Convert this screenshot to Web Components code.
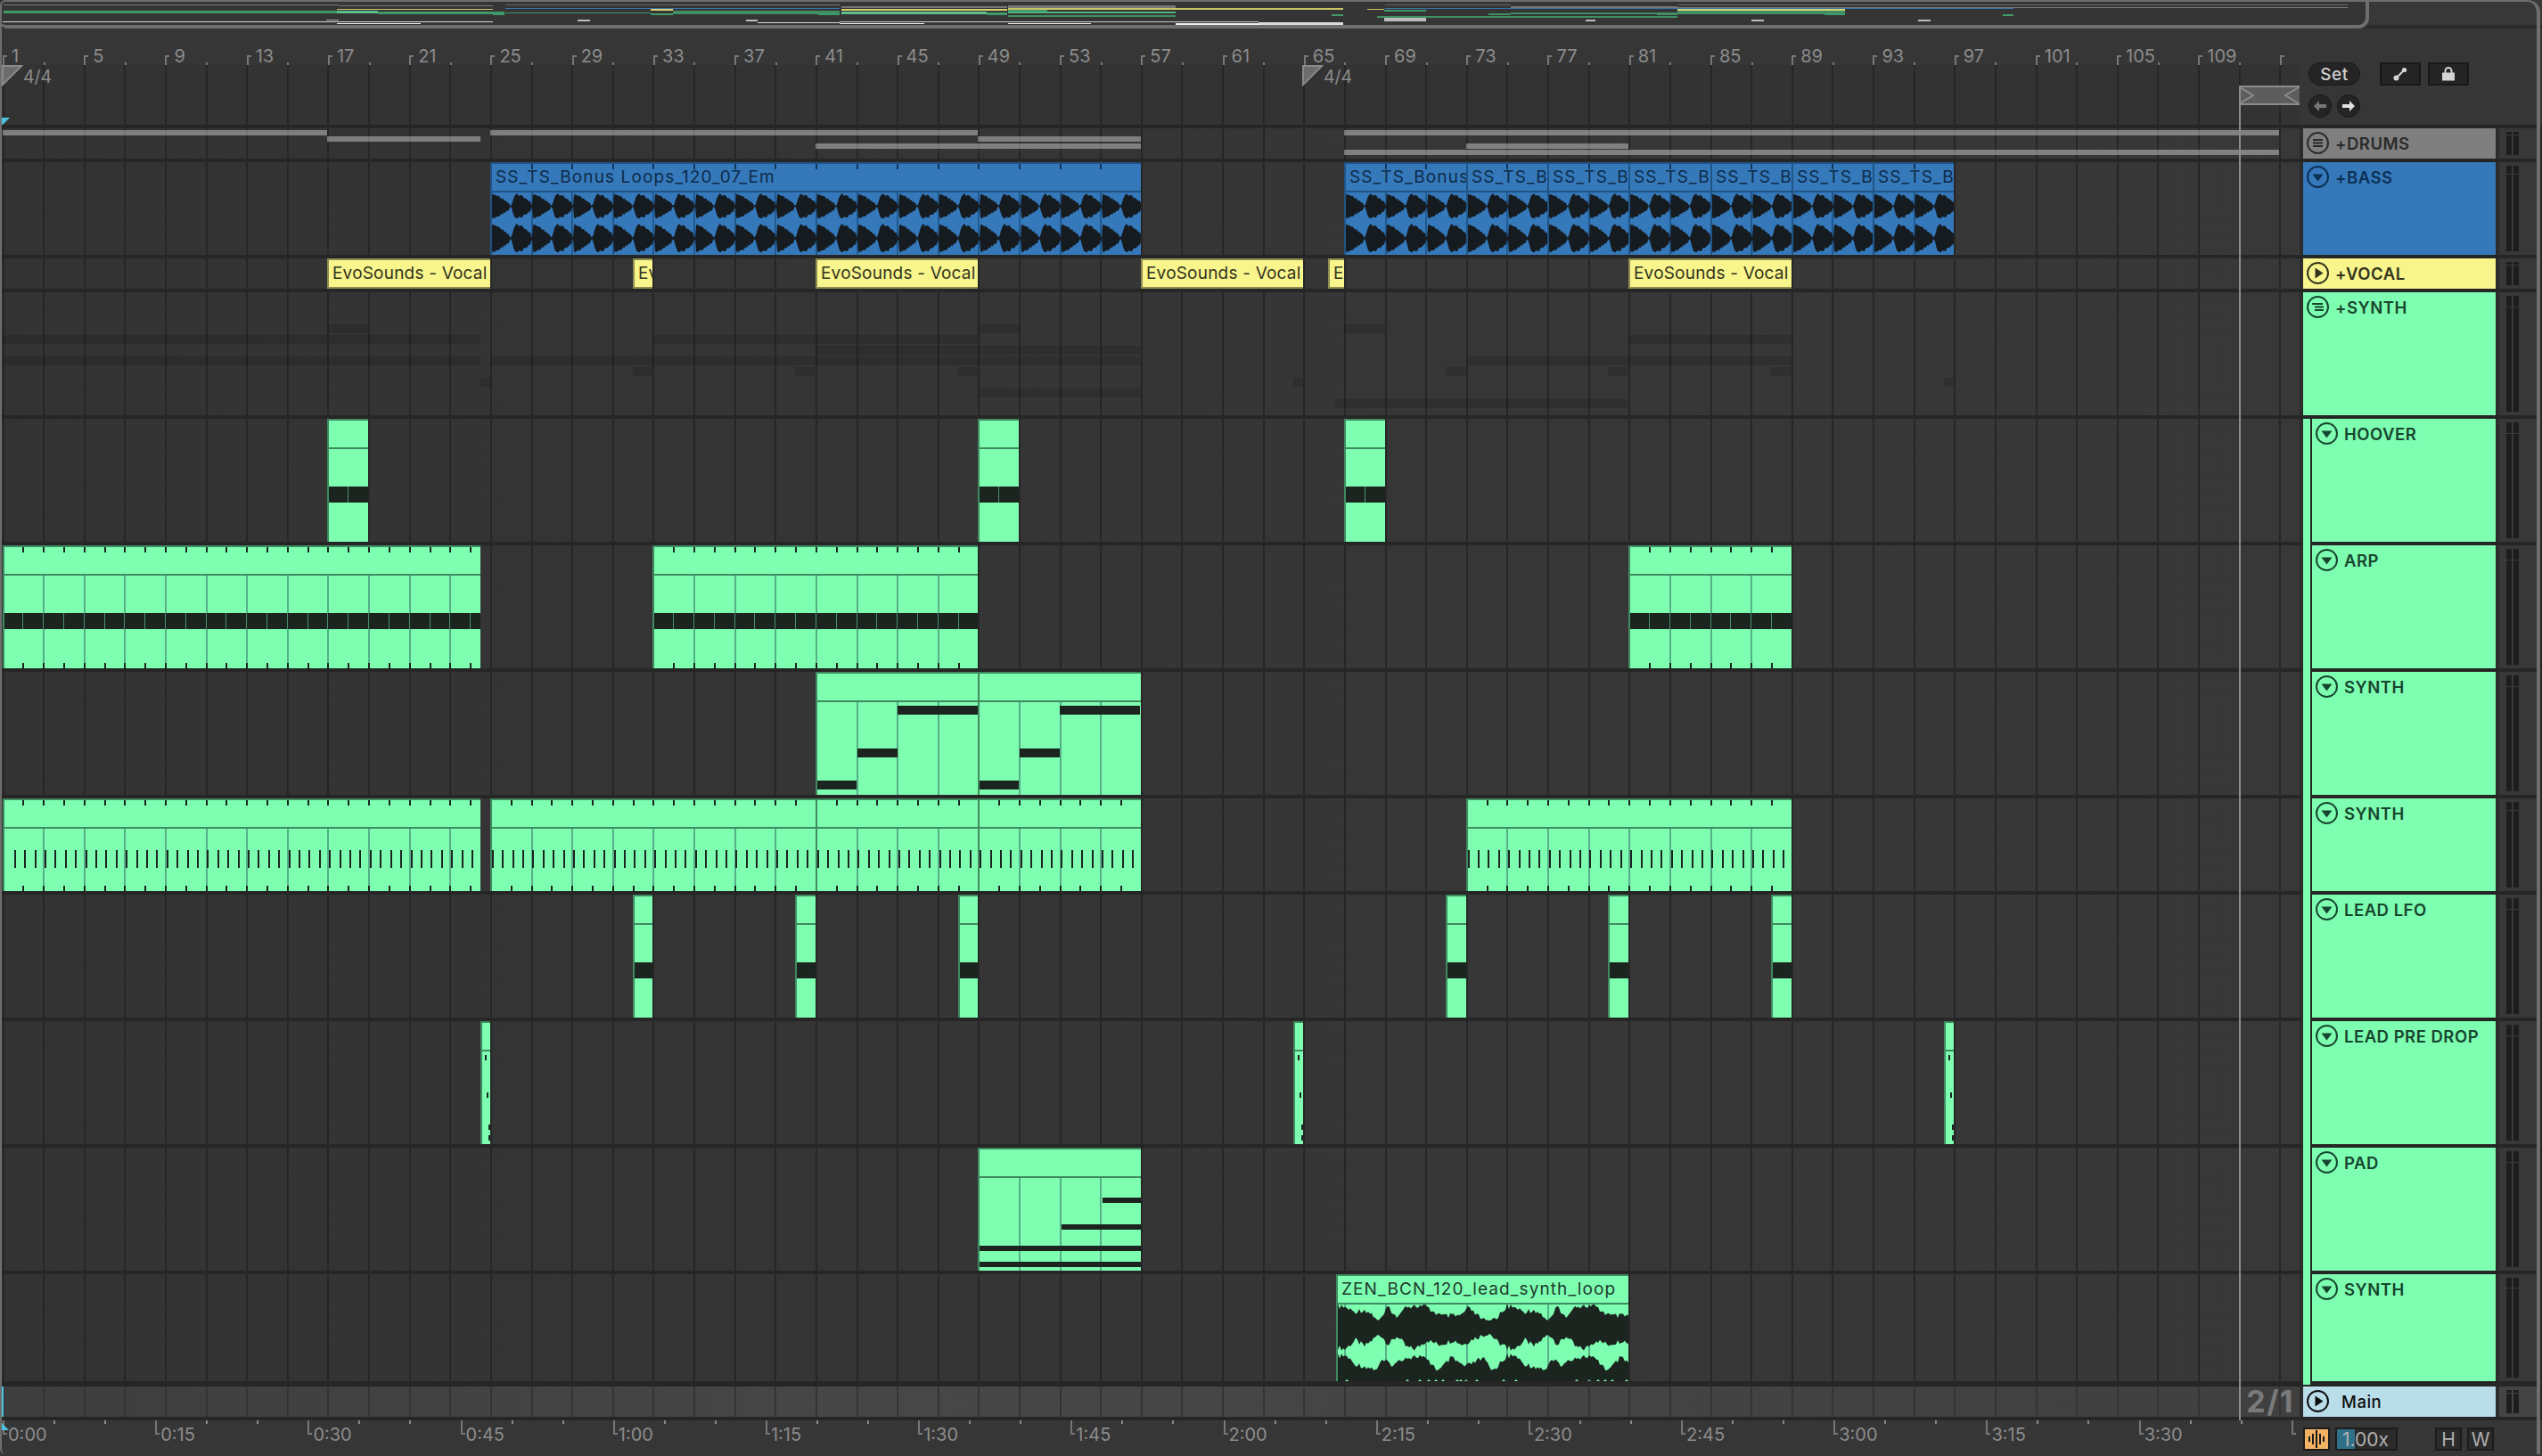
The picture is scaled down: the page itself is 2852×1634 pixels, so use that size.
<!DOCTYPE html>
<html>
<head>
<meta charset="utf-8">
<title>Arrangement</title>
<style>
html,body{margin:0;padding:0;background:#363636;overflow:hidden}
body{font-family:Inter,"Liberation Sans",sans-serif}
</style>
</head>
<body>
<daw-app>
  <daw-overview></daw-overview>
  <daw-ruler></daw-ruler>
  <daw-arrangement>
    <daw-track name="+DRUMS" tone="gray" icon="lines" h="34">
      <daw-block from="1" to="17" y="2" h="6"></daw-block>
      <daw-block from="25" to="49" y="2" h="6"></daw-block>
      <daw-block from="67" to="113" y="2" h="6"></daw-block>
      <daw-block from="17" to="24.5" y="9" h="6"></daw-block>
      <daw-block from="49" to="57" y="9" h="6"></daw-block>
      <daw-block from="41" to="57" y="17" h="6"></daw-block>
      <daw-block from="73" to="81" y="17" h="6"></daw-block>
      <daw-block from="67" to="113" y="24" h="6"></daw-block>
    </daw-track>
    <daw-track name="+BASS" tone="blue" icon="down" h="104">
      <daw-clip from="25" to="57" tone="blue" ticks="2" wave="blue" wide label="SS_TS_Bonus Loops_120_07_Em"></daw-clip>
      <daw-clip from="67" to="73" tone="blue" ticks="2" wave="blue" wide label="SS_TS_Bonus"></daw-clip>
      <daw-clip from="73" to="77" tone="blue" ticks="2" wave="blue" wide label="SS_TS_Bo"></daw-clip>
      <daw-clip from="77" to="81" tone="blue" ticks="2" wave="blue" wide label="SS_TS_B"></daw-clip>
      <daw-clip from="81" to="85" tone="blue" ticks="2" wave="blue" wide label="SS_TS_Bo"></daw-clip>
      <daw-clip from="85" to="89" tone="blue" ticks="2" wave="blue" wide label="SS_TS_Bo"></daw-clip>
      <daw-clip from="89" to="93" tone="blue" ticks="2" wave="blue" wide label="SS_TS_B"></daw-clip>
      <daw-clip from="93" to="97" tone="blue" ticks="2" wave="blue" wide label="SS_TS_Bo"></daw-clip>
    </daw-track>
    <daw-track name="+VOCAL" tone="yellow" icon="play" h="34">
      <daw-clip from="17" to="25" tone="yellow" plain label="EvoSounds - Vocal"></daw-clip>
      <daw-clip from="32" to="33" tone="yellow" plain label="Ev"></daw-clip>
      <daw-clip from="41" to="49" tone="yellow" plain label="EvoSounds - Vocal"></daw-clip>
      <daw-clip from="57" to="65" tone="yellow" plain label="EvoSounds - Vocal"></daw-clip>
      <daw-clip from="66.2" to="67" tone="yellow" plain label="E"></daw-clip>
      <daw-clip from="81" to="89" tone="yellow" plain label="EvoSounds - Vocal"></daw-clip>
    </daw-track>
    <daw-track name="+SYNTH" tone="green" icon="fold" h="138">
      <daw-block shade from="17" to="19" y="36" h="10"></daw-block>
      <daw-block shade from="49" to="51" y="36" h="10"></daw-block>
      <daw-block shade from="67" to="69" y="36" h="10"></daw-block>
      <daw-block shade from="1" to="24.5" y="48" h="10"></daw-block>
      <daw-block shade from="33" to="49" y="48" h="10"></daw-block>
      <daw-block shade from="81" to="89" y="48" h="10"></daw-block>
      <daw-block shade from="41" to="57" y="60" h="10"></daw-block>
      <daw-block shade from="1" to="24.5" y="72" h="10"></daw-block>
      <daw-block shade from="25" to="57" y="72" h="10"></daw-block>
      <daw-block shade from="73" to="89" y="72" h="10"></daw-block>
      <daw-block shade from="32" to="33" y="84" h="10"></daw-block>
      <daw-block shade from="40" to="41" y="84" h="10"></daw-block>
      <daw-block shade from="48" to="49" y="84" h="10"></daw-block>
      <daw-block shade from="72" to="73" y="84" h="10"></daw-block>
      <daw-block shade from="80" to="81" y="84" h="10"></daw-block>
      <daw-block shade from="88" to="89" y="84" h="10"></daw-block>
      <daw-block shade from="24.5" to="25" y="96" h="10"></daw-block>
      <daw-block shade from="64.5" to="65" y="96" h="10"></daw-block>
      <daw-block shade from="96.5" to="97" y="96" h="10"></daw-block>
      <daw-block shade from="49" to="57" y="108" h="10"></daw-block>
      <daw-block shade from="66.55" to="81" y="120" h="10"></daw-block>
    </daw-track>
    <daw-track name="HOOVER" tone="green" icon="down" h="138" nested>
      <daw-clip from="17" to="19" tone="green" band="76 18"></daw-clip>
      <daw-clip from="49" to="51" tone="green" band="76 18"></daw-clip>
      <daw-clip from="67" to="69" tone="green" band="76 18"></daw-clip>
    </daw-track>
    <daw-track name="ARP" tone="green" icon="down" h="138" nested>
      <daw-clip from="1" to="24.5" tone="green" ticks="1" both band="76 18"></daw-clip>
      <daw-clip from="33" to="49" tone="green" ticks="1" both band="76 18"></daw-clip>
      <daw-clip from="81" to="89" tone="green" ticks="1" both band="76 18"></daw-clip>
    </daw-track>
    <daw-track name="SYNTH" tone="green" icon="down" h="138" nested>
      <daw-clip from="41" to="49" tone="green" notes="1 122 44 10;46 86 45 10;91 38 90 10"></daw-clip>
      <daw-clip from="49" to="57" tone="green" notes="1 122 44 10;46 86 45 10;91 38 90 10"></daw-clip>
    </daw-track>
    <daw-track name="SYNTH" tone="green" icon="down" h="104" nested>
      <daw-clip from="1" to="24.5" tone="green" ticks="1" both pulse="58 20"></daw-clip>
      <daw-clip from="25" to="41" tone="green" ticks="1" both pulse="58 20"></daw-clip>
      <daw-clip from="41" to="49" tone="green" ticks="1" both pulse="58 20"></daw-clip>
      <daw-clip from="49" to="57" tone="green" ticks="1" both pulse="58 20"></daw-clip>
      <daw-clip from="73" to="89" tone="green" ticks="1" both pulse="58 20"></daw-clip>
    </daw-track>
    <daw-track name="LEAD LFO" tone="green" icon="down" h="138" nested>
      <daw-clip from="32" to="33" tone="green" band="76 18"></daw-clip>
      <daw-clip from="40" to="41" tone="green" band="76 18"></daw-clip>
      <daw-clip from="48" to="49" tone="green" band="76 18"></daw-clip>
      <daw-clip from="72" to="73" tone="green" band="76 18"></daw-clip>
      <daw-clip from="80" to="81" tone="green" band="76 18"></daw-clip>
      <daw-clip from="88" to="89" tone="green" band="76 18"></daw-clip>
    </daw-track>
    <daw-track name="LEAD PRE DROP" tone="green" icon="down" h="138" nested>
      <daw-clip from="24.5" to="25" tone="green" notes="4 38 2 6;6 80 2 6;10 110 2 6;8 116 2 6;8 128 2 6"></daw-clip>
      <daw-clip from="64.5" to="65" tone="green" notes="4 38 2 6;6 80 2 6;10 110 2 6;8 116 2 6;8 128 2 6"></daw-clip>
      <daw-clip from="96.5" to="97" tone="green" notes="4 38 2 6;6 80 2 6;10 110 2 6;8 116 2 6;8 128 2 6"></daw-clip>
    </daw-track>
    <daw-track name="PAD" tone="green" icon="down" h="138" nested>
      <daw-clip from="49" to="57" tone="green" notes="139 56 44 6;93 86 90 6;1 110 182 6;1 128 182 6"></daw-clip>
    </daw-track>
    <daw-track name="SYNTH" tone="green" icon="down" h="120" nested>
      <daw-clip from="66.6" to="81" tone="green" wave="green" wide label="ZEN_BCN_120_lead_synth_loop"></daw-clip>
    </daw-track>
    <daw-track name="Main" tone="sky" icon="play" h="34" main>
      <daw-meter-label>2/1</daw-meter-label>
    </daw-track>
  </daw-arrangement>
  <daw-timeline></daw-timeline>
</daw-app>

<script>
// timeline: one bar is 22.81px, first bar starts just right of the window edge
const BAR = 22.81, X0 = 3.5;
const barX = b => X0 + (b - 1) * BAR;
const snap = b => Math.round(barX(b) - 1);

function gridLines(color) {
  let r = '';
  for (let n = 0; n <= 56; n++) {
    r += `<rect x="${Math.round(X0 + n * BAR * 2) - 1}" y="0" width="2" height="100%"/>`;
  }
  return `<svg class="grid" width="2580" height="100%" fill="${color}" shape-rendering="crispEdges" style="position:absolute;left:0;top:0;height:100%">${r}</svg>`;
}

const ICONS = {
  lines: '<rect x="7" y="8" width="11" height="2"/><rect x="7" y="11.5" width="11" height="2"/><rect x="7" y="15" width="11" height="2"/>',
  fold: '<rect x="6" y="8" width="12" height="2"/><rect x="9" y="11.5" width="10" height="2"/><rect x="9" y="15" width="10" height="2"/>',
  down: '<polygon points="6.5,9.5 18.5,9.5 12.5,17.5"/>',
  play: '<polygon points="9.5,6.5 9.5,18.5 18.5,12.5"/>'
};

class DawApp extends HTMLElement {
  constructor() {
    super();
    this.attachShadow({mode: 'open'}).innerHTML = `
<style>
:host{display:flex;flex-direction:column;position:relative;width:2852px;height:1634px;overflow:hidden;background:#363636;font-family:Inter,"Liberation Sans",sans-serif}
.frame{position:absolute;left:0;top:0;width:2844px;height:1630px;border:solid #6e6e6e;border-width:2px 4px 0 2px;border-radius:6px 14px 0 6px;pointer-events:none;z-index:6}
.loopline{position:absolute;left:2512px;top:96px;width:2px;height:1498px;background:#8c8c8c;z-index:5}
</style>
<slot></slot><div class="loopline"></div><div class="frame"></div>`;
  }
}

class DawOverview extends HTMLElement {
  constructor() {
    super();
    const segs = [
      // grey summary lines
      [4,380,5,1,'#7a7a7a'],[380,553,6,1,'#7a7a7a'],[567,942,5,1,'#666'],[755,942,5,1,'#777'],[944,1130,7,2,'#777'],[1131,1319,6,3,'#777'],
      [1554,1695,5,1,'#666'],[1695,1882,7,2,'#777'],[1882,2634,5,1,'#666'],[1882,2634,8,1,'#777'],
      // blue
      [567,942,9,1,'#3a74a8'],[1554,2259,9,1,'#3a74a8'],
      // yellow
      [378,553,10,1,'#c9c368'],[730,755,10,2,'#d8d26e'],[944,1130,10,2,'#d8d26e'],[1131,1507,9,2,'#c9c368'],[1534,1553,10,1,'#c9c368'],[1882,2070,10,2,'#d8d26e'],
      // green
      [4,378,12,3,'#3f9a68'],[378,424,12,3,'#58c088'],[424,553,13,3,'#3f9a68'],[553,566,13,4,'#3f9a68'],[567,730,14,1,'#3f9a68'],[730,755,15,2,'#3f9a68'],
      [755,942,12,4,'#3f8f62'],[918,942,15,2,'#3f9a68'],[944,1107,13,3,'#5fc08a'],[1107,1130,14,3,'#3f9a68'],[1131,1319,13,2,'#55b080'],[1131,1175,11,2,'#3f9a68'],[1131,1319,17,2,'#3f8f62'],
      [1494,1507,16,2,'#3f9a68'],[1553,1600,11,2,'#3f9a68'],[1545,1882,18,2,'#3f8f62'],[1670,1695,15,2,'#3f8f62'],[1695,1882,14,2,'#3f8f62'],[1859,1882,15,2,'#3f8f62'],[1882,2070,12,4,'#3f8f62'],[2047,2070,15,2,'#3f9a68'],[2247,2259,16,2,'#3f9a68'],
      // white
      [3,553,24,1,'#d8d8d8'],[378,472,26,1,'#eee'],[366,380,22,1,'#aaa'],[648,662,22,2,'#bbb'],[837,850,22,2,'#bbb'],[850,942,25,1,'#ddd'],[942,1412,24,1,'#ccc'],[942,1037,26,1,'#eee'],
      [1131,1224,26,1,'#eee'],[1319,1412,26,2,'#f0f0f0'],[1412,1507,25,3,'#dcdcdc'],[1553,1600,20,4,'#bdbdbd'],[1779,1790,22,2,'#bbb'],[1965,1979,22,2,'#bbb'],[2152,2166,22,2,'#bbb']
    ];
    this.attachShadow({mode: 'open'}).innerHTML = `
<style>
:host{display:block;position:relative;height:32px;flex:none;background:#383838;box-shadow:inset 0 -4px 0 #2b2b2b}
.view{position:absolute;left:0;top:0;width:2654px;height:28px;background:#353535;border:solid #6e6e6e;border-width:0 4px 4px 0;border-radius:0 0 12px 8px}
i{position:absolute}
</style>
<div class="view"></div>${segs.map(s => `<i style="left:${s[0]}px;width:${s[1]-s[0]}px;top:${s[2]}px;height:${s[3]}px;background:${s[4]}"></i>`).join('')}`;
  }
}

class DawRuler extends HTMLElement {
  constructor() {
    super();
    let cells = '';
    for (let b = 1; b <= 113; b += 4) {
      cells += `<div class="cell">${b < 113 ? `<span>${b}</span>` : ''}</div>`;
    }
    this.attachShadow({mode: 'open'}).innerHTML = `
<style>
:host{display:grid;grid-template-columns:2580px 272px;height:108px;flex:none}
.left{display:flex;flex-direction:column;min-width:0}
.bars{display:flex;height:41px;padding-left:3px;flex:none}
.cell{flex:none;width:91.24px;box-sizing:border-box;height:41px;color:#8c8c8c;font-size:20px;line-height:20px;padding:21px 0 0 10px;
  background:linear-gradient(#777,#777) 0 30px/2px 11px no-repeat,linear-gradient(#777,#777) 0 30px/5px 2px no-repeat,linear-gradient(#777,#777) 45.6px 38px/2px 3px no-repeat}
.sig{position:relative;flex:1;background:#333}
.sig span{position:absolute;top:2px;color:#8c8c8c;font-size:19.5px;line-height:22px}
.sig svg.mark{position:absolute;top:0}
.cue{position:absolute;left:2px;top:59px}
.brace{position:absolute;left:2512px;top:23px;width:68px;height:22px}
.right{display:flex;flex-direction:column;gap:10px;padding:38px 0 0 10px;box-sizing:border-box}
.row{display:flex;align-items:center}
.set{width:58px;height:26px;box-sizing:border-box;border-radius:13px;background:#242424;border:1px solid #1a1a1a;color:#cfcfcf;font-size:19px;display:flex;align-items:center;justify-content:center;font-weight:500;letter-spacing:.5px}
.btn{width:46px;height:26px;box-sizing:border-box;background:#242424;border:2px solid #181818;display:flex;align-items:center;justify-content:center}
.nav{width:26px;height:26px;border-radius:50%;box-sizing:border-box;background:#242424;border:1px solid #1a1a1a;display:flex;align-items:center;justify-content:center}
</style>
<div class="left">
  <div class="bars">${cells}</div>
  <div class="sig">${gridLines('#262626')}
    <svg class="mark" style="left:2px" width="24" height="24"><polygon points="1,1 22,1 1,22" fill="#6c6c6c" stroke="#8a8a8a" stroke-width="2"/></svg><span style="left:26px">4/4</span>
    <svg class="mark" style="left:1461px" width="24" height="24"><polygon points="1,1 22,1 1,22" fill="#6c6c6c" stroke="#8a8a8a" stroke-width="2"/></svg><span style="left:1485px">4/4</span>
    <svg class="cue" width="9" height="8"><polygon points="0,0 9,0 1,8 0,8" fill="#4cc2dc"/></svg>
    <svg class="brace" width="68" height="22"><rect x="0" y="0" width="68" height="22" fill="#5d5d5d"/><path d="M0 1H68M0 21H68" stroke="#8c8c8c" stroke-width="2"/><path d="M1 2L16 11L1 20M67 2L52 11L67 20" fill="none" stroke="#8c8c8c" stroke-width="2"/></svg>
  </div>
</div>
<div class="right">
  <div class="row">
    <div class="set">Set</div>
    <div class="btn" style="margin-left:22px"><svg width="16" height="16"><path d="M3.5 12.5L12.5 3.5" stroke="#d4d4d4" stroke-width="2"/><circle cx="3.5" cy="12.5" r="3" fill="#d4d4d4"/><circle cx="12.5" cy="3.5" r="2.6" fill="#d4d4d4"/></svg></div>
    <div class="btn" style="margin-left:8px"><svg width="16" height="16"><rect x="1" y="6.5" width="14" height="9" fill="#d4d4d4"/><path d="M4.5 7V4.5a3.5 3.5 0 0 1 7 0V7" fill="none" stroke="#d4d4d4" stroke-width="2"/></svg></div>
  </div>
  <div class="row">
    <div class="nav"><svg width="16" height="14"><path d="M1 7L7 1V5H15V9H7V13Z" fill="#777"/></svg></div>
    <div class="nav" style="margin-left:6px"><svg width="16" height="14"><path d="M15 7L9 1V5H1V9H9V13Z" fill="#e2e2e2"/></svg></div>
  </div>
</div>`;
  }
}

class DawArrangement extends HTMLElement {
  constructor() {
    super();
    this.attachShadow({mode: 'open'}).innerHTML = `
<style>
:host{display:flex;flex-direction:column;gap:4px;padding:4px 6px 4px 0;background:#262626;flex:none}
</style><slot></slot>`;
  }
}

class DawTrack extends HTMLElement {
  connectedCallback() {
    if (this.shadowRoot) return;
    const h = +this.getAttribute('h');
    const tones = {
      gray: ['#7f7f7f', '#2a2a2a'], blue: ['#3579bb', '#0b2f52'], yellow: ['#f8f58c', '#33331d'],
      green: ['#7dfeb0', '#17452f'], sky: ['#b9dde9', '#0e0e0e']
    };
    const [bg, fg] = tones[this.getAttribute('tone')];
    const main = this.hasAttribute('main'), nested = this.hasAttribute('nested');
    const cap = Math.round(h * .09);
    const meter = `<b style="height:${cap}px"></b><b style="flex:1"></b>`;
    this.attachShadow({mode: 'open'}).innerHTML = `
<style>
:host{display:grid;grid-template-columns:2580px 4px 216px 4px 46px;height:${h}px;flex:none;${main ? 'margin-top:2px' : ''}}
.lane{position:relative;overflow:hidden;background:${main ? 'linear-gradient(90deg,#3e3e3e,#474747 40%,#404040)' : 'linear-gradient(90deg,#333,#383838)'}}
.sep{background:#2c2c2c}
.head{position:relative;background:${bg};color:${fg};font-size:18.5px;font-weight:${main ? 500 : 600};letter-spacing:.5px;line-height:34px;
  padding-left:${nested ? 46 : 36}px;white-space:nowrap}
.head svg{position:absolute;left:${nested ? 14 : 4}px;top:4px}
.strip{position:absolute;left:0;top:0;bottom:-4px;width:8px;background:${bg};border-right:2px solid #262626;z-index:1}
.name{${main ? 'margin-left:7px' : ''}}
.mix{background:${main ? '#444' : '#383838'};display:flex;gap:2px;padding:4px 0 4px 8px}
.fader{width:6px;display:flex;flex-direction:column;gap:1px}
.fader b{display:block;background:#1d1d1d}
</style>
<div class="lane">${gridLines(main ? '#343434' : '#262626')}<slot></slot></div>
<div class="sep"></div>
<div class="head">${nested ? '<div class="strip"></div>' : ''}<svg width="26" height="26" fill="currentColor"><circle cx="12.5" cy="12.5" r="11.5" fill="none" stroke="currentColor" stroke-width="2"/>${ICONS[this.getAttribute('icon')]}</svg><span class="name">${this.getAttribute('name')}</span></div>
<div class="sep"></div>
<div class="mix"><div class="fader">${meter}</div><div class="fader">${meter}</div></div>`;
    if (main) {
      const cue = document.createElement('div');
      cue.style.cssText = 'position:absolute;left:2px;top:0;bottom:0;width:2px;background:#4cc2dc';
      this.shadowRoot.querySelector('.lane').appendChild(cue);
    }
  }
}

class DawBlock extends HTMLElement {
  connectedCallback() {
    if (this.shadowRoot) return;
    const l = snap(+this.getAttribute('from')), r = snap(+this.getAttribute('to'));
    const tint = this.hasAttribute('shade') ? 'rgba(0,0,0,.13)' : 'rgba(255,255,255,.37)';
    this.attachShadow({mode: 'open'}).innerHTML = `
<style>:host{position:absolute;left:${l}px;width:${r - l}px;top:${this.getAttribute('y')}px;height:${this.getAttribute('h')}px;background:${tint}}</style>`;
  }
}

// small pseudo noise so the waveforms stay the same on each load
const noise = i => { const s = Math.sin(i * 12.9898) * 43758.5453; return s - Math.floor(s); };

function blueWave(w) {
  const env = [[0,1],[.03,1],[.1,.92],[.2,.8],[.3,.62],[.4,.38],[.46,.16],[.5,.4],[.56,.92],[.62,1],[.72,.92],[.84,.72],[.94,.45],[1,.12]];
  const amp = u => {
    for (let i = 1; i < env.length; i++) if (u <= env[i][0]) {
      const a = env[i - 1], b = env[i];
      return a[1] + (b[1] - a[1]) * (u - a[0]) / (b[0] - a[0]);
    }
    return 0;
  };
  const channel = (c, A) => {
    const top = [], bot = [];
    for (let x = 0; x <= w; x += 1) {
      const p = x % (BAR * 2);
      const u = p / (BAR * 2);
      const k = Math.round(p);
      const a = Math.max(1, amp(u) * A - noise(k) * 2.5);
      top.push(x + ' ' + (c - a).toFixed(1));
      bot.unshift(x + ' ' + (c + a - noise(k + 9) * 1.5).toFixed(1));
    }
    return 'M' + top.concat(bot).join('L') + 'Z';
  };
  return `<path d="${channel(16, 15)}${channel(52, 17)}" fill="#161b20"/>`;
}

function greenWave(w) {
  // contours read off the reference, one 190px period, y from the top of the clip body
  const up = [[0,2],[10,4],[17,8],[30,6],[37,10],[47,19],[57,2],[67,17],[73,2],[97,2],[107,8],[117,13],[137,13],[147,4],[157,13],[168,20],[180,13],[190,2]];
  const lo = [[0,48],[8,50],[20,40],[30,47],[47,33],[57,45],[67,35],[77,48],[87,50],[100,40],[113,45],[130,40],[140,45],[153,38],[170,32],[180,43],[190,48]];
  const ch2 = [[0,58],[10,58],[17,66],[43,73],[50,63],[63,68],[73,60],[93,58],[107,68],[113,75],[127,60],[143,70],[163,60],[173,75],[190,58]];
  const at = (t, x) => {
    const p = x % 190;
    for (let i = 1; i < t.length; i++) if (p <= t[i][0]) {
      const a = t[i - 1], b = t[i];
      return a[1] + (b[1] - a[1]) * (p - a[0]) / (b[0] - a[0]);
    }
    return t[0][1];
  };
  const a = [], b = [], c = [], d = [];
  for (let x = 0; x <= w; x += 2) {
    const j = Math.round((x % 190) / 2);
    const n = (noise(j) - .5) * 6;
    a.push(x + ' ' + (at(up, x) + n).toFixed(1));
    b.unshift(x + ' ' + (at(lo, x) - n).toFixed(1));
    c.push(x + ' ' + (at(ch2, x) + n).toFixed(1));
    d.unshift(x + ' ' + (noise(j + 50) > .86 ? 84 : 86));
  }
  return `<path d="M${a.concat(b).join('L')}ZM${c.concat(d).join('L')}Z" fill="#1c2420"/>`;
}

class DawClip extends HTMLElement {
  connectedCallback() {
    if (this.shadowRoot) return;
    const from = +this.getAttribute('from'), to = +this.getAttribute('to');
    const left = snap(from), width = snap(to) - left;
    const tone = this.getAttribute('tone');
    const pal = {
      green: {bg: '#7dfeb0', edge: '#3f8a60', line: '#55b088', ink: '#1c2420', text: '#1d3a2d'},
      blue: {bg: '#3579bb', edge: '#1f5487', line: '#205a90', ink: '#10365c', text: '#0d2b48'},
      yellow: {bg: '#f8f58c', edge: '#8f8d52', line: '#8f8d52', ink: '#33331d', text: '#33331d'}
    }[tone];
    const plain = this.hasAttribute('plain');
    const label = this.getAttribute('label') || '';
    const lx = b => snap(b) - left;
    let layer = '', body = '';

    if (!plain) {
      for (let b = 3; b < 113; b += 2) {
        if (b > from && b < to) body += `<i style="left:${lx(b) - 2}px;top:0;bottom:0;width:2px;background:${pal.line}"></i>`;
      }
    }
    const wave = this.getAttribute('wave');
    if (wave) {
      body += `<svg style="position:absolute;left:0;top:0" width="${width}" height="${wave === 'blue' ? 70 : 86}">${wave === 'blue' ? blueWave(width) : greenWave(width)}</svg>`;
    }
    // bar ticks along the clip edge
    const step = +this.getAttribute('ticks');
    if (step) {
      for (let b = Math.ceil(from) + step; b < to; b += step) {
        layer += `<i style="left:${lx(b)}px;top:2px;height:6px;width:2px;background:${pal.ink}"></i>`;
        if (this.hasAttribute('both')) layer += `<i style="left:${lx(b)}px;bottom:0;height:6px;width:2px;background:${pal.ink}"></i>`;
      }
    }
    // a held note per bar, the hair gap between them stays a dim green
    if (this.hasAttribute('band')) {
      const [y, h] = this.getAttribute('band').split(' ');
      layer += `<i style="left:2px;right:0;top:${y}px;height:${h}px;background:#4a8f6c"></i>`;
      for (let b = from; b < to; b++) {
        const l = b === from ? 2 : lx(b) + 1;
        const r = b + 1 >= to ? width : lx(b + 1);
        layer += `<i style="left:${l}px;width:${r - l}px;top:${y}px;height:${h}px;background:${pal.ink}"></i>`;
      }
    }
    // short notes on every half bar
    if (this.hasAttribute('pulse')) {
      const [y, h] = this.getAttribute('pulse').split(' ');
      for (let n = 0; n < 240; n++) {
        const x = Math.round(3.5 + n * BAR / 2 + .8) - left;
        if (x >= 2 && x < width - 2) layer += `<i style="left:${x}px;width:2px;top:${y}px;height:${h}px;background:${pal.ink}"></i>`;
      }
    }
    const notes = this.getAttribute('notes');
    if (notes) {
      notes.split(';').forEach(s => {
        const [x, y, w, h] = s.split(' ').map(Number);
        layer += `<i style="left:${x + 1}px;width:${w}px;top:${y}px;height:${h}px;background:${pal.ink}"></i>`;
      });
    }

    const size = `font-size:19px;letter-spacing:${this.hasAttribute('wide') ? 1.1 : .2}px`;
    this.attachShadow({mode: 'open'}).innerHTML = `
<style>
:host{position:absolute;left:${left}px;width:${width}px;top:0;bottom:0;overflow:hidden;box-sizing:border-box;background:${pal.bg};border-left:2px solid ${pal.edge}}
.band{box-sizing:border-box;height:${plain ? '100%' : '34px'};border-top:2px solid ${pal.edge};border-bottom:2px solid ${pal.edge};
  color:${pal.text};${size};line-height:30px;padding-left:4px;white-space:nowrap;overflow:hidden}
.body{position:absolute;left:0;right:0;top:34px;bottom:0}
.body i,.layer i{position:absolute;display:block}
.layer{position:absolute;left:-2px;right:0;top:0;bottom:0}
</style>
<div class="band">${label}</div>
${plain ? '' : `<div class="body">${body}</div>`}
<div class="layer">${layer}</div>`;
  }
}

class DawMeterLabel extends HTMLElement {
  constructor() {
    super();
    this.attachShadow({mode: 'open'}).innerHTML = `
<style>:host{position:absolute;right:6px;top:0;line-height:34px;font-size:34px;font-weight:700;color:#7a7a7a;letter-spacing:1.5px}</style><slot></slot>`;
  }
}

class DawTimeline extends HTMLElement {
  constructor() {
    super();
    let cells = '';
    for (let s = 0; s <= 225; s += 15) {
      const t = `${Math.floor(s / 60)}:${String(s % 60).padStart(2, '0')}`;
      cells += `<div class="cell">${s <= 210 ? `<span>${t}</span>` : ''}</div>`;
    }
    this.attachShadow({mode: 'open'}).innerHTML = `
<style>
:host{display:grid;grid-template-columns:2584px 1fr;flex:1;min-height:0;background:#363636}
.left{position:relative;display:flex;padding-left:3px;overflow:hidden;width:2580px;box-sizing:border-box}
.cell{flex:none;width:171.2px;box-sizing:border-box;color:#8c8c8c;font-size:20px;line-height:24px;padding:4px 0 0 6px;
  background:linear-gradient(#777,#777) 0 0/2px 16px no-repeat,linear-gradient(#777,#777) 0 14px/5px 2px no-repeat,linear-gradient(#888,#888) 57px 0/2px 4px no-repeat,linear-gradient(#888,#888) 114px 0/2px 4px no-repeat}
.cue{position:absolute;left:2px;top:3px}
.right{display:flex;align-items:flex-start;padding-top:8px}
.box{height:26px;box-sizing:border-box;border:2px solid #1c1c1c;background:#2b2b2b;color:#b0b0b0;font-size:21px;display:flex;align-items:center;justify-content:center;flex:none}
.wave{width:30px;background:#f3b263}
.rate{width:70px;margin-left:6px;position:relative;justify-content:flex-start;padding-left:6px;font-size:21px}
.rate i{position:absolute;left:0;top:0;bottom:0;width:20px;background:#2f7088}
.rate span{position:relative}
</style>
<div class="left">${cells}<svg class="cue" width="8" height="8"><polygon points="0,0 8,8 0,8" fill="#4cc2dc"/></svg></div>
<div class="right">
  <div class="box wave"><svg width="20" height="20" fill="#1a1a1a"><rect x="1" y="7" width="2" height="6"/><rect x="5" y="4" width="2" height="12"/><rect x="9" y="0" width="2" height="20"/><rect x="13" y="4" width="2" height="12"/><rect x="17" y="7" width="2" height="6"/></svg></div>
  <div class="box rate"><i></i><span>1.00x</span></div>
  <div class="box" style="width:30px;margin-left:42px">H</div>
  <div class="box" style="width:30px;margin-left:6px">W</div>
</div>`;
  }
}

customElements.define('daw-app', DawApp);
customElements.define('daw-overview', DawOverview);
customElements.define('daw-ruler', DawRuler);
customElements.define('daw-arrangement', DawArrangement);
customElements.define('daw-track', DawTrack);
customElements.define('daw-block', DawBlock);
customElements.define('daw-clip', DawClip);
customElements.define('daw-meter-label', DawMeterLabel);
customElements.define('daw-timeline', DawTimeline);
</script>
</body>
</html>
